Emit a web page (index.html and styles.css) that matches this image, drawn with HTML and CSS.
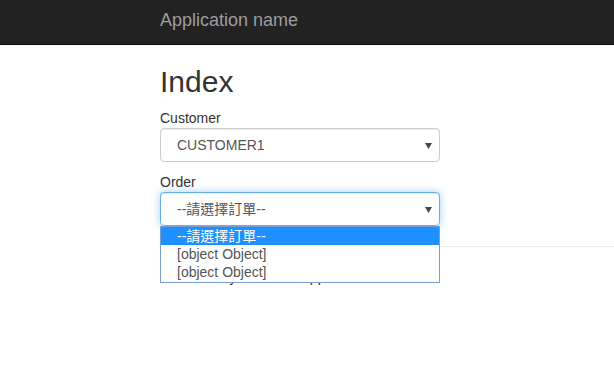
FILE: index.html
```html
<!DOCTYPE html>
<html lang="zh-Hant">
<head>
<meta charset="utf-8">
<title>Index</title>
<link rel="stylesheet" href="styles.css">
</head>
<body>
<nav class="navbar">
  <div class="container">
    <a class="brand">Application name</a>
  </div>
</nav>
<main class="container body-content">
  <h2 class="title">Index</h2>
  <div class="form-group">
    <label class="label">Customer</label>
    <div class="select">
      <span class="select-text">CUSTOMER1</span>
      <svg class="arrow" width="7" height="6" viewBox="0 0 7 6"><polygon points="0,0 7,0 3.5,6" fill="#444"/></svg>
    </div>
  </div>
  <div class="form-group last">
    <label class="label">Order</label>
    <div class="select-wrap">
      <div class="select focused">
        <span class="select-text">--請選擇訂單--</span>
        <svg class="arrow" width="7" height="6" viewBox="0 0 7 6"><polygon points="0,0 7,0 3.5,6" fill="#444"/></svg>
      </div>
      <ul class="dropdown">
        <li class="option selected">--請選擇訂單--</li>
        <li class="option">[object Object]</li>
        <li class="option">[object Object]</li>
      </ul>
    </div>
  </div>
  <hr class="rule">
  <footer class="footer">
    <p class="footer-text">© 2017 - My ASP.NET Application</p>
  </footer>
</main>
</body>
</html>
```

FILE: styles.css
```css
* { box-sizing: border-box; }
html, body { margin: 0; padding: 0; }
body {
  font-family: "Liberation Sans", Arial, "Noto Sans CJK TC", sans-serif;
  font-size: 14px;
  line-height: 20px;
  color: #333;
  background: #fff;
  overflow: hidden;
}
.container {
  padding-left: 160px;
}
.navbar {
  height: 45px;
  background: #222;
  border-bottom: 1px solid #080808;
}
.brand {
  display: block;
  padding-top: 10px;
  font-size: 18px;
  line-height: 20px;
  color: #9d9d9d;
  text-decoration: none;
}
.title {
  margin: 20px 0 10px;
  font-size: 30px;
  font-weight: 500;
  line-height: 33px;
  color: #333;
}
.form-group {
  margin-bottom: 10px;
}
.form-group.last { margin-bottom: 0; }
.label {
  display: block;
  height: 20px;
  font-weight: normal;
}
.select-wrap {
  position: relative;
  width: 280px;
}
.select {
  position: relative;
  width: 280px;
  height: 34px;
  border: 1px solid #ccc;
  border-radius: 4px;
  padding: 0 12px 0 16px;
  display: flex;
  align-items: center;
  color: #555;
  background: #fff;
  box-shadow: inset 0 1px 1px rgba(0,0,0,.075);
}
.select.focused {
  border-color: #66afe9;
  box-shadow: inset 0 1px 1px rgba(0,0,0,.075), 0 0 8px rgba(102,175,233,.6);
}
.select-text { flex: 1; }
.arrow {
  position: absolute;
  right: 7px;
  top: 14px;
}
.dropdown {
  position: absolute;
  left: 0;
  top: 34px;
  width: 280px;
  margin: 0;
  padding: 0 0 1px;
  list-style: none;
  background: #fff;
  border: 1px solid #7a9cd3;
  z-index: 2;
}
.option {
  height: 18px;
  line-height: 18px;
  padding-left: 16px;
  color: #555;
}
.option.selected {
  background: #1e90ff;
  color: #fff;
}
.rule {
  margin: 20px 0 20px;
  border: 0;
  border-top: 1px solid #eee;
  height: 0;
}
.footer-text {
  margin: 0 0 10px;
}
```
